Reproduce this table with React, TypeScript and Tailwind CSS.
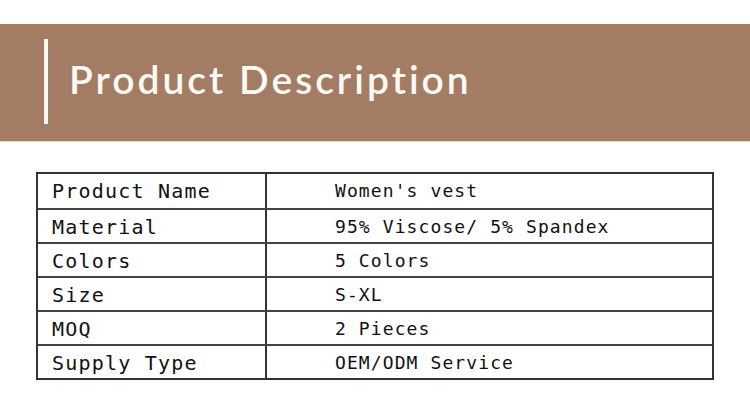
const rows = [
    { label: 'Product Name', value: "Women's vest" },
    { label: 'Material', value: '95% Viscose/ 5% Spandex' },
    { label: 'Colors', value: '5 Colors' },
    { label: 'Size', value: 'S-XL' },
    { label: 'MOQ', value: '2 Pieces' },
    { label: 'Supply Type', value: 'OEM/ODM Service' },
]

export default function App() {
    return (
        <div className="w-[750px] h-[400px] bg-white overflow-hidden">
            {/* Header banner */}
            <div className="mt-[24px] h-[117px] bg-[#a47c64] flex items-start pl-[44px]">
                <div className="mt-[15px] w-[4px] h-[85px] bg-[#fdfaf6]" />
                <h1
                    className="ml-[21px] mt-[31px] text-[39px] leading-[48px] font-semibold tracking-[3px] text-[#fdfaf6]"
                    style={{ fontFamily: 'Lato, "Noto Sans", sans-serif' }}
                >
                    Product Description
                </h1>
            </div>
            <div className="h-[1px] bg-[#e3d6cc]" />

            {/* Spec table */}
            <div className="mt-[30px] ml-[36px] w-[678px] border-2 border-[#333]" style={{ fontFamily: '"DejaVu Sans Mono", "Liberation Mono", monospace' }}>
                {rows.map((row, i) => (
                    <div
                        key={row.label}
                        className={`flex h-[34px] ${i > 0 ? 'border-t-2 border-[#444]' : ''}`}
                    >
                        <div className="w-[229px] border-r-2 border-[#333] pl-[14px] pt-[4px] text-[20px] leading-[26px] tracking-[1.2px] text-[#111]">
                            {row.label}
                        </div>
                        <div className="flex-1 pl-[68px] pt-[5px] text-[18px] leading-[24px] tracking-[1.1px] text-[#111]">
                            {row.value}
                        </div>
                    </div>
                ))}
            </div>
        </div>
    )
}
